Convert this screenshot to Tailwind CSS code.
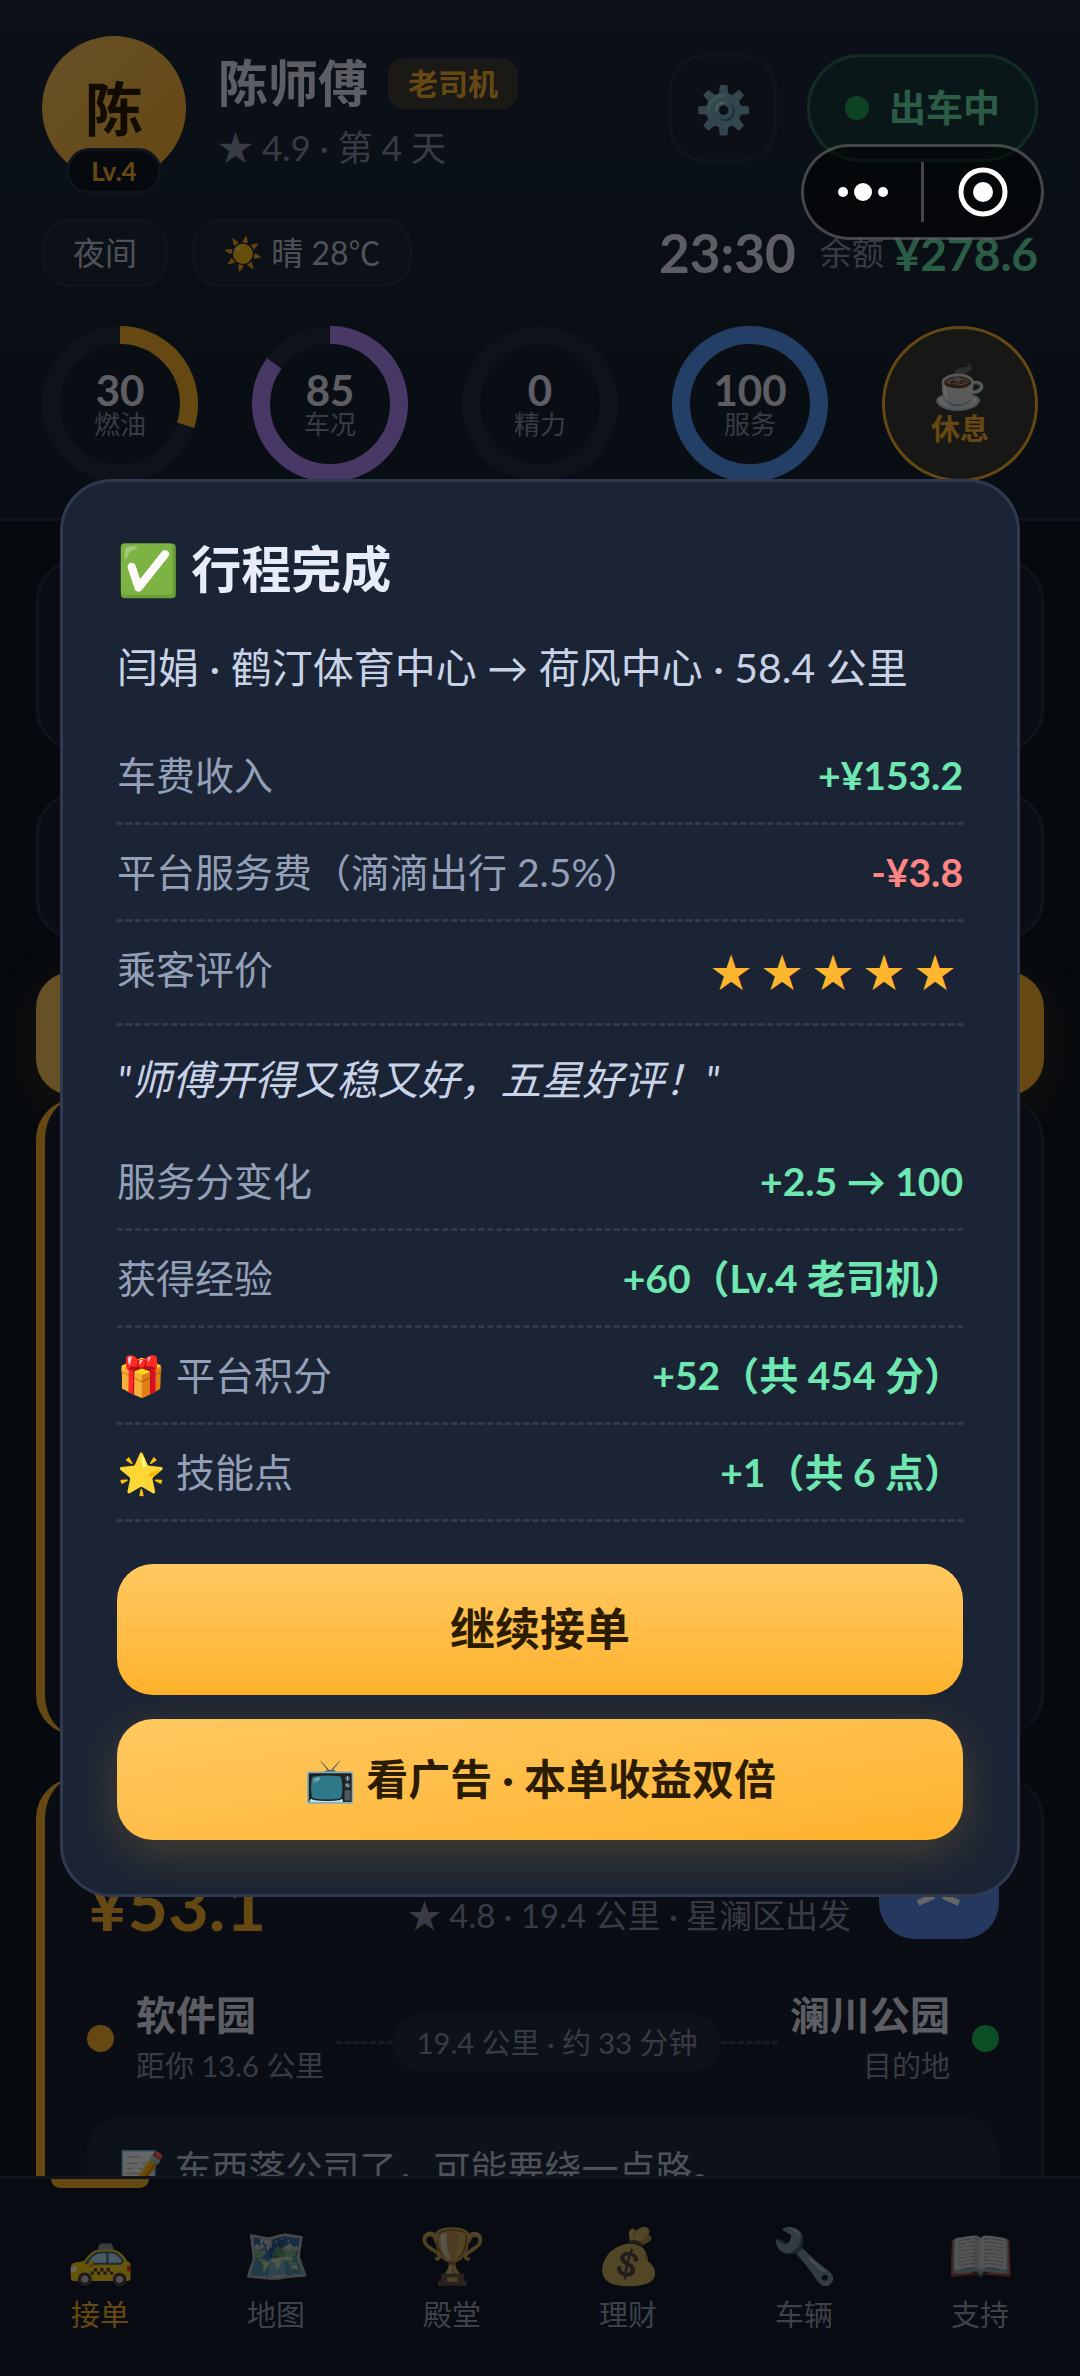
<!DOCTYPE html>
<html lang="zh-CN">
<head>
  <meta charset="UTF-8" />
  <meta name="viewport" content="width=device-width, initial-scale=1.0" />
  <title>行程完成</title>
  <script src="https://cdn.jsdelivr.net/npm/@tailwindcss/browser@4"></script>
</head>
<body class="h-screen overflow-hidden bg-[#0f1722] font-[Lato,'Noto_Sans_CJK_SC',sans-serif] text-[#e8ecf8]">

  <!-- Header -->
  <header class="bg-linear-to-b from-[#1e2b3e] to-[#162232] border-b-3 border-[#2a3347] px-[42px] py-9">
    <div class="flex items-center">
      <div class="relative size-36 shrink-0 rounded-full bg-linear-to-br from-[#ffc95f] to-[#ffb52e] flex items-center justify-center text-[58px] font-bold text-[#2b1c00]">
        陈
        <span class="absolute -bottom-[14px] left-1/2 -translate-x-1/2 flex h-[46px] items-center rounded-full border-3 border-[#2a3347] bg-[#0f1722] px-[22px] text-[26px] text-[#ffb52e]">Lv.4</span>
      </div>
      <div class="ml-8 pt-[10px]">
        <div class="flex items-center gap-5">
          <h1 class="text-[50px] leading-[56px] font-bold">陈师傅</h1>
          <span class="rounded-2xl bg-[#ffb52e]/16 px-5 text-[30px] leading-[51px] font-bold text-[#ffb52e]">老司机</span>
        </div>
        <p class="mt-3 text-[35px] leading-[48px] text-[#8c95a8]">★ 4.9 · 第 4 天</p>
      </div>
      <button class="ml-auto flex size-[108px] items-center justify-center rounded-[36px] border-3 border-[#2a3347] bg-[#1f2838] text-[46px]" aria-label="设置">⚙️</button>
      <button class="ml-[30px] flex h-[108px] items-center gap-5 rounded-full border-3 border-[#2f6f58] bg-[#1a3a3c] px-[35px] text-[37px] font-bold text-[#6ee7b0]">
        <span class="size-6 rounded-full bg-[#22a558]"></span>出车中
      </button>
    </div>

    <div class="mt-[39px] flex h-[68px] items-center text-[32px] text-[#c3cbdc]">
      <span class="flex h-full items-center rounded-[28px] border-3 border-[#2a3347] bg-[#1f2a3b] px-7">夜间</span>
      <span class="ml-6 flex h-full items-center rounded-[28px] border-3 border-[#2a3347] bg-[#1f2a3b] px-7">☀️ 晴 28℃</span>
      <span class="ml-auto text-[53px] font-bold text-[#e8ecf8]">23:30</span>
      <span class="ml-6 text-[#8c95a8]">余额</span>
      <span class="ml-[10px] text-[46px] font-bold text-[#6ee7b0]">¥278.6</span>
    </div>

    <div class="mt-[39px] flex justify-between">
      <div class="relative size-[156px]">
        <svg class="absolute inset-0 size-full -rotate-90" viewBox="0 0 156 156" fill="none" stroke-width="18">
          <circle cx="78" cy="78" r="69" stroke="#243042" />
          <circle cx="78" cy="78" r="69" stroke="#ffb52e" pathLength="100" stroke-dasharray="30 100" />
        </svg>
        <div class="relative flex size-full flex-col items-center justify-center">
          <b class="text-[42px] leading-10">30</b>
          <span class="text-[26px] leading-7 text-[#8c95a8]">燃油</span>
        </div>
      </div>
      <div class="relative size-[156px]">
        <svg class="absolute inset-0 size-full -rotate-90" viewBox="0 0 156 156" fill="none" stroke-width="18">
          <circle cx="78" cy="78" r="69" stroke="#243042" />
          <circle cx="78" cy="78" r="69" stroke="#b48cff" pathLength="100" stroke-dasharray="85 100" />
        </svg>
        <div class="relative flex size-full flex-col items-center justify-center">
          <b class="text-[42px] leading-10">85</b>
          <span class="text-[26px] leading-7 text-[#8c95a8]">车况</span>
        </div>
      </div>
      <div class="relative size-[156px]">
        <svg class="absolute inset-0 size-full -rotate-90" viewBox="0 0 156 156" fill="none" stroke-width="18">
          <circle cx="78" cy="78" r="69" stroke="#243042" />
        </svg>
        <div class="relative flex size-full flex-col items-center justify-center">
          <b class="text-[42px] leading-10">0</b>
          <span class="text-[26px] leading-7 text-[#8c95a8]">精力</span>
        </div>
      </div>
      <div class="relative size-[156px]">
        <svg class="absolute inset-0 size-full -rotate-90" viewBox="0 0 156 156" fill="none" stroke-width="18">
          <circle cx="78" cy="78" r="69" stroke="#5b9dff" />
        </svg>
        <div class="relative flex size-full flex-col items-center justify-center">
          <b class="text-[42px] leading-10">100</b>
          <span class="text-[26px] leading-7 text-[#8c95a8]">服务</span>
        </div>
      </div>
      <button class="flex size-[156px] flex-col items-center justify-center rounded-full border-3 border-[#ffb52e] bg-[#3a3a38] text-[#ffb52e]">
        <span class="text-[43px] leading-[50px]">☕</span>
        <span class="text-[29px] leading-9 font-bold">休息</span>
      </button>
    </div>
  </header>

  <!-- Order list -->
  <main class="px-9 pt-[39px]">
    <section class="h-[190px] rounded-[40px] border-3 border-[#2a3347] bg-[#1b2434]"></section>
    <section class="mt-[43px] h-[147px] rounded-[40px] border-3 border-[#2a3347] bg-[#1b2434]"></section>
    <div class="mt-8 h-[123px] rounded-[36px] bg-linear-to-r from-[#ffc95f] to-[#ffb52e] shadow-[0_12px_48px_rgba(255,181,46,0.2)]"></div>
    <article class="mt-1 h-[636px] rounded-[40px] border-r-3 border-l-9 border-r-[#2a3347] border-l-[#ffb52e] bg-[#1b2434]"></article>

    <article class="mt-[43px] rounded-[40px] border-r-3 border-l-9 border-r-[#2a3347] border-l-[#ffb52e] bg-[#1b2434] px-[42px] py-[41px]">
      <div class="flex items-end">
        <b class="text-[70px] leading-[70px] text-[#ffb52e]">¥53.1</b>
        <span class="ml-auto text-[33px] leading-12 text-[#8c95a8]">★ 4.8 · 19.4 公里 · 星澜区出发</span>
        <svg class="ml-7 size-30" viewBox="0 0 120 120" fill="none" aria-label="接单">
          <rect width="120" height="120" rx="36" fill="#5b8def" />
          <path d="M39 84L55 77M80 84L64 77" stroke="#fff" stroke-width="6" />
        </svg>
      </div>
      <div class="mt-12 flex items-center">
        <span class="size-[27px] rounded-full bg-[#ffb52e]"></span>
        <div class="ml-[22px]">
          <b class="block text-[40px] leading-[56px]">软件园</b>
          <span class="block text-[29px] leading-[46px] text-[#8c95a8]">距你 13.6 公里</span>
        </div>
        <div class="flex flex-1 items-center px-3 pt-2">
          <span class="flex-1 border-t-3 border-dashed border-[#3a455c]"></span>
          <span class="rounded-full bg-[#222d42] px-6 text-[29px] leading-[57px] text-[#8c95a8]">19.4 公里 · 约 33 分钟</span>
          <span class="flex-1 border-t-3 border-dashed border-[#3a455c]"></span>
        </div>
        <div class="mr-[22px] text-right">
          <b class="block text-[40px] leading-[56px]">澜川公园</b>
          <span class="block text-[29px] leading-[46px] text-[#8c95a8]">目的地</span>
        </div>
        <span class="size-[27px] rounded-full bg-[#22c55e]"></span>
      </div>
      <p class="mt-7 rounded-[36px] bg-[#222d42] px-8 py-6 text-[37px] leading-[56px] text-[#c3cbdc]">📝 东西落公司了，可能要绕一点路。</p>
    </article>
  </main>

  <!-- Tab bar -->
  <nav class="fixed inset-x-0 bottom-0 grid h-[200px] grid-cols-6 border-t-3 border-[#2a3347] bg-[#141f2e] px-3 text-[29px] text-[#98a2b6]">
    <a href="#" class="flex flex-col items-center text-[#ffb52e]">
      <span class="h-[9px] w-[98px] rounded-b-xl bg-[#ffb52e]"></span>
      <span class="mt-[33px] text-[54px] leading-[68px]">🚕</span>
      <span class="mt-[6px] leading-10">接单</span>
    </a>
    <a href="#" class="flex flex-col items-center pt-[42px]">
      <span class="text-[54px] leading-[68px] opacity-85 grayscale-[40%]">🗺️</span>
      <span class="mt-[6px] leading-10">地图</span>
    </a>
    <a href="#" class="flex flex-col items-center pt-[42px]">
      <span class="text-[54px] leading-[68px] opacity-85 grayscale-[40%]">🏆</span>
      <span class="mt-[6px] leading-10">殿堂</span>
    </a>
    <a href="#" class="flex flex-col items-center pt-[42px]">
      <span class="text-[54px] leading-[68px] opacity-85 grayscale-[40%]">💰</span>
      <span class="mt-[6px] leading-10">理财</span>
    </a>
    <a href="#" class="flex flex-col items-center pt-[42px]">
      <span class="text-[54px] leading-[68px] opacity-85 grayscale-[40%]">🔧</span>
      <span class="mt-[6px] leading-10">车辆</span>
    </a>
    <a href="#" class="flex flex-col items-center pt-[42px]">
      <span class="text-[54px] leading-[68px] opacity-85 grayscale-[40%]">📖</span>
      <span class="mt-[6px] leading-10">支持</span>
    </a>
  </nav>

  <!-- Trip summary dialog -->
  <div class="fixed inset-0 flex items-center justify-center bg-black/60 px-15">
    <div role="dialog" aria-labelledby="tripTitle" class="w-full rounded-[52px] border-3 border-[#2f3a50] bg-[#1b2434] p-[54px]">
      <h2 id="tripTitle" class="text-[50px] leading-[66px] font-bold">✅ 行程完成</h2>
      <p class="mt-[34px] mb-7 text-[41px] leading-16 text-[#c9d3e8]">闫娟 · 鹤汀体育中心 → 荷风中心 · 58.4 公里</p>

      <dl class="text-[39px] leading-[94px] text-[#94a0b8]">
        <div class="flex justify-between border-b-3 border-dashed border-[#2f3a50]">
          <dt>车费收入</dt>
          <dd class="font-bold text-[#6ee7b0]">+¥153.2</dd>
        </div>
        <div class="flex justify-between border-b-3 border-dashed border-[#2f3a50]">
          <dt>平台服务费（滴滴出行 2.5%）</dt>
          <dd class="font-bold text-[#ff8585]">-¥3.8</dd>
        </div>
        <div class="flex justify-between border-b-3 border-dashed border-[#2f3a50]">
          <dt>乘客评价</dt>
          <dd class="flex gap-[11px] pr-2 text-[40px] leading-[101px] text-[#ffb52e]"><span>★</span><span>★</span><span>★</span><span>★</span><span>★</span></dd>
        </div>
      </dl>

      <p class="py-6 text-[41px] leading-[60px] text-[#c9d3e8] italic">"师傅开得又稳又好，五星好评！"</p>

      <dl class="text-[39px] leading-[94px] text-[#94a0b8]">
        <div class="flex justify-between border-b-3 border-dashed border-[#2f3a50]">
          <dt>服务分变化</dt>
          <dd class="font-bold text-[#6ee7b0]">+2.5 → 100</dd>
        </div>
        <div class="flex justify-between border-b-3 border-dashed border-[#2f3a50]">
          <dt>获得经验</dt>
          <dd class="font-bold text-[#6ee7b0]">+60（Lv.4 老司机）</dd>
        </div>
        <div class="flex justify-between border-b-3 border-dashed border-[#2f3a50]">
          <dt>🎁 平台积分</dt>
          <dd class="font-bold text-[#6ee7b0]">+52（共 454 分）</dd>
        </div>
        <div class="flex justify-between border-b-3 border-dashed border-[#2f3a50]">
          <dt>🌟 技能点</dt>
          <dd class="font-bold text-[#6ee7b0]">+1（共 6 点）</dd>
        </div>
      </dl>

      <button class="mt-[42px] h-[131px] w-full rounded-[36px] bg-linear-to-b from-[#ffc95f] to-[#ffb22a] text-[45px] font-bold text-[#2b1c00]">继续接单</button>
      <button class="mt-6 h-[121px] w-full rounded-[36px] bg-linear-to-br from-[#ffc95f] to-[#ffb22a] text-[42px] font-bold text-[#2b1c00] shadow-[0_12px_48px_rgba(255,181,46,0.2)]">📺 看广告 · 本单收益双倍</button>
    </div>
  </div>

  <!-- Mini program capsule -->
  <div class="fixed top-36 right-9 flex h-24 w-[243px] items-center rounded-full border-3 border-white/25 bg-black/50 text-white">
    <button class="flex flex-1 items-center justify-center gap-[6px]" aria-label="更多">
      <span class="size-[10px] rounded-full bg-white"></span>
      <span class="size-[18px] rounded-full bg-white"></span>
      <span class="size-[10px] rounded-full bg-white"></span>
    </button>
    <span class="h-15 w-[3px] bg-white/25"></span>
    <button class="flex flex-1 items-center justify-center" aria-label="关闭">
      <svg class="size-[50px]" viewBox="0 0 50 50">
        <circle cx="25" cy="25" r="22" fill="none" stroke="currentColor" stroke-width="5" />
        <circle cx="25" cy="25" r="10" fill="currentColor" />
      </svg>
    </button>
  </div>

</body>
</html>
